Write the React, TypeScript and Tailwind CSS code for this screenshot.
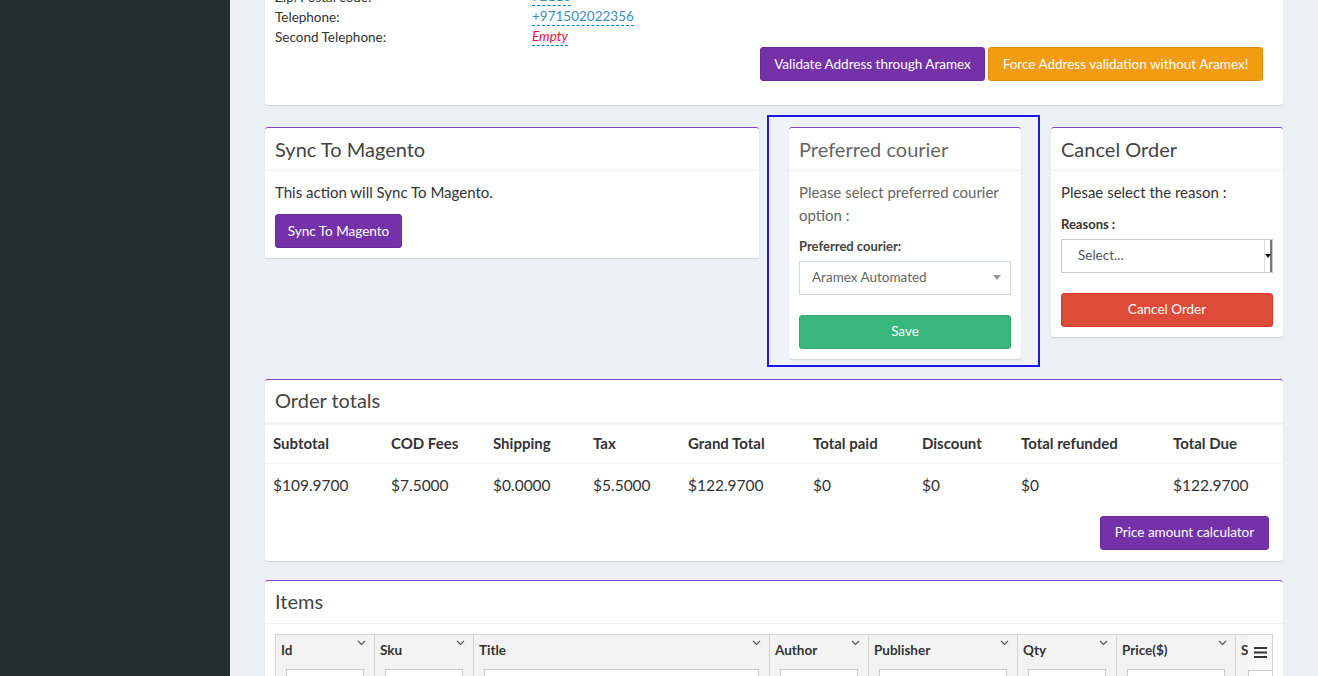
import React from 'react';

const font = { fontFamily: 'Lato, "Open Sans", sans-serif' };

type BoxProps = { title: string; muted?: boolean; children: React.ReactNode; className?: string };

// Generic AdminLTE-ish box
const Box: React.FC<BoxProps> = ({ title, muted, children, className = '' }) => (
  <div className={`bg-white rounded-[3px] border-t border-[#8245bd] shadow-[0_1px_1px_rgba(0,0,0,0.12)] ${className}`}>
    <div className="h-[43px] flex items-center px-[10px] pb-[1px] border-b border-[#f0f0f0]">
      <h3 className={`text-[20px] leading-none ${muted ? 'text-[#666]' : 'text-[#444]'}`}>{title}</h3>
    </div>
    {children}
  </div>
);

const PurpleButton: React.FC<{ children: React.ReactNode; className?: string }> = ({ children, className = '' }) => (
  <button className={`h-[34px] rounded-[3px] bg-[#7532a8] border border-[#6a2c99] text-white text-[13.5px] whitespace-nowrap ${className}`}>
    {children}
  </button>
);

const Chevron = () => (
  <svg width="9" height="6" viewBox="0 0 9 6" className="shrink-0">
    <path d="M1 1l3.5 3.5L8 1" fill="none" stroke="#555" strokeWidth="1.2" />
  </svg>
);

const totals = [
  { label: 'Subtotal', value: '$109.9700', w: 'w-[118px]' },
  { label: 'COD Fees', value: '$7.5000', w: 'w-[102px]' },
  { label: 'Shipping', value: '$0.0000', w: 'w-[100px]' },
  { label: 'Tax', value: '$5.5000', w: 'w-[95px]' },
  { label: 'Grand Total', value: '$122.9700', w: 'w-[125px]' },
  { label: 'Total paid', value: '$0', w: 'w-[109px]' },
  { label: 'Discount', value: '$0', w: 'w-[99px]' },
  { label: 'Total refunded', value: '$0', w: 'w-[152px]' },
  { label: 'Total Due', value: '$122.9700', w: 'flex-1' },
];

const columns = [
  { name: 'Id', w: 'w-[99px]', input: 'w-[78px]' },
  { name: 'Sku', w: 'w-[99px]', input: 'w-[78px]' },
  { name: 'Title', w: 'w-[296px]', input: 'w-[275px]' },
  { name: 'Author', w: 'w-[99px]', input: 'w-[78px]' },
  { name: 'Publisher', w: 'w-[149px]', input: 'w-[128px]' },
  { name: 'Qty', w: 'w-[99px]', input: 'w-[78px]' },
  { name: 'Price($)', w: 'w-[119px]', input: 'w-[98px]' },
];

export default function App() {
  return (
    <div className="flex h-[676px] overflow-hidden" style={font}>
      <aside className="w-[230px] shrink-0 bg-[#222d32]" />

      <main className="flex-1 bg-[#ecf0f5] pl-[35px] pr-[35px] text-[#333]">
        {/* Address box (scrolled past its top) */}
        <div className="-mt-[13px] bg-white rounded-[3px] shadow-[0_1px_1px_rgba(0,0,0,0.12)] pl-[10px] pr-[20px] pb-[24px] text-[13.5px]">
          <div className="flex h-[20px] items-center">
            <span className="w-[257px]">Zip/Postal code:</span>
            <span className="text-[#3c8dbc] border-b border-dashed border-[#0088cc] leading-[17px]">72110</span>
          </div>
          <div className="flex h-[20px] items-center">
            <span className="w-[257px]">Telephone:</span>
            <span className="text-[#3c8dbc] border-b border-dashed border-[#0088cc] leading-[17px]">+971502022356</span>
          </div>
          <div className="flex h-[20px] items-center">
            <span className="w-[257px]">Second Telephone:</span>
            <span className="text-[#dd1144] italic border-b border-dashed border-[#0088cc] leading-[17px]">Empty</span>
          </div>
          <div className="flex justify-end gap-[3px]">
            <PurpleButton className="w-[225px]">Validate Address through Aramex</PurpleButton>
            <button className="h-[34px] w-[275px] rounded-[3px] bg-[#f39c12] border border-[#e08e0b] text-white text-[13.5px] whitespace-nowrap">
              Force Address validation without Aramex!
            </button>
          </div>
        </div>

        {/* Actions row */}
        <div className="flex items-start mt-[22px] gap-[30px]">
          <Box title="Sync To Magento" className="w-[494px]">
            <div className="p-[10px]">
              <p className="text-[15px] leading-[22px] mb-[11px]">This action will Sync To Magento.</p>
              <PurpleButton className="w-[127px]">Sync To Magento</PurpleButton>
            </div>
          </Box>

          <div className="relative w-[232px]">
            <div className="absolute -left-[22px] -right-[19px] -top-[12px] -bottom-[8px] border-2 border-[#1a1ae6] bg-[#eff2f8]" />
            <Box title="Preferred courier" muted className="relative">
              <div className="p-[10px]">
                <p className="text-[15px] leading-[23px] text-[#666]">Please select preferred courier option :</p>
                <div className="text-[13px] font-bold text-[#444] mt-[10px] mb-[4px]">Preferred courier:</div>
                <div className="h-[34px] border border-[#d2d6de] flex items-center pl-[12px] pr-[9px] text-[13.5px] text-[#666]">
                  <span className="flex-1">Aramex Automated</span>
                  <span className="w-0 h-0 border-x-[4px] border-x-transparent border-t-[5px] border-t-[#999]" />
                </div>
                <button className="mt-[20px] w-full h-[34px] rounded-[3px] bg-[#38b77d] border border-[#33a872] text-white text-[13.5px]">
                  Save
                </button>
              </div>
            </Box>
          </div>

          <Box title="Cancel Order" className="w-[232px]">
            <div className="p-[10px]">
              <p className="text-[15px] leading-[22px]">Plesae select the reason :</p>
              <div className="text-[13px] font-bold text-[#333] mt-[12px] mb-[4px]">Reasons :</div>
              <div className="h-[34px] border border-[#ccc] flex items-center pl-[16px] text-[13.5px] text-[#555]">
                <span className="flex-1">Select...</span>
                <span className="h-full w-[8px] border-l border-[#ddd] border-r-2 border-r-[#777] flex items-center justify-center">
                  <span className="w-0 h-0 border-x-[3px] border-x-transparent border-t-[4px] border-t-[#111]" />
                </span>
              </div>
              <button className="mt-[20px] w-full h-[34px] rounded-[3px] bg-[#dd4b39] border border-[#d73925] text-white text-[13.5px]">
                Cancel Order
              </button>
            </div>
          </Box>
        </div>

        {/* Order totals */}
        <Box title="Order totals" className="mt-[20px]">
          <div className="border-t-2 border-[#f4f4f4]">
            <div className="flex h-[39px] items-center border-b border-[#f4f4f4]">
              {totals.map(t => (
                <div key={t.label} className={`${t.w} px-[8px] text-[15px] font-bold text-[#333]`}>{t.label}</div>
              ))}
            </div>
            <div className="flex h-[45px] items-center">
              {totals.map(t => (
                <div key={t.label} className={`${t.w} px-[8px] text-[15.5px] text-[#333]`}>{t.value}</div>
              ))}
            </div>
            <div className="flex justify-end pr-[14px] pt-[7px] pb-[11px]">
              <PurpleButton className="w-[169px]">Price amount calculator</PurpleButton>
            </div>
          </div>
        </Box>

        {/* Items */}
        <Box title="Items" className="mt-[19px]">
          <div className="p-[10px]">
            <div className="flex border border-[#d4d4d4] bg-[#f3f3f3] h-[60px] overflow-hidden">
              {columns.map(c => (
                <div key={c.name} className={`${c.w} shrink-0 border-r border-[#d4d4d4] px-[5px] pt-[3px]`}>
                  <div className="flex items-start justify-between h-[31px]">
                    <span className="text-[13.5px] font-bold text-[#333] mt-[2px]">{c.name}</span>
                    <span className="mr-[3px] mt-[2px]"><Chevron /></span>
                  </div>
                  <div className={`${c.input} ml-[5px] h-[24px] bg-white border border-[#ccc]`} />
                </div>
              ))}
              <div className="flex-1 relative pl-[5px] pt-[5px]">
                <div className="text-[13.5px] font-bold text-[#333] leading-[20px]">S</div>
                <div className="absolute left-[12px] top-0 right-0 h-[36px] bg-[#f8f8f8] flex items-center justify-center">
                  <svg width="13" height="11" viewBox="0 0 13 11">
                    <rect x="0" y="0" width="13" height="2" fill="#333" />
                    <rect x="0" y="4.5" width="13" height="2" fill="#333" />
                    <rect x="0" y="9" width="13" height="2" fill="#333" />
                  </svg>
                </div>
                <div className="absolute left-[12px] top-[35px] w-[30px] h-[24px] bg-white border border-[#ccc]" />
              </div>
            </div>
          </div>
        </Box>
      </main>
    </div>
  );
}
